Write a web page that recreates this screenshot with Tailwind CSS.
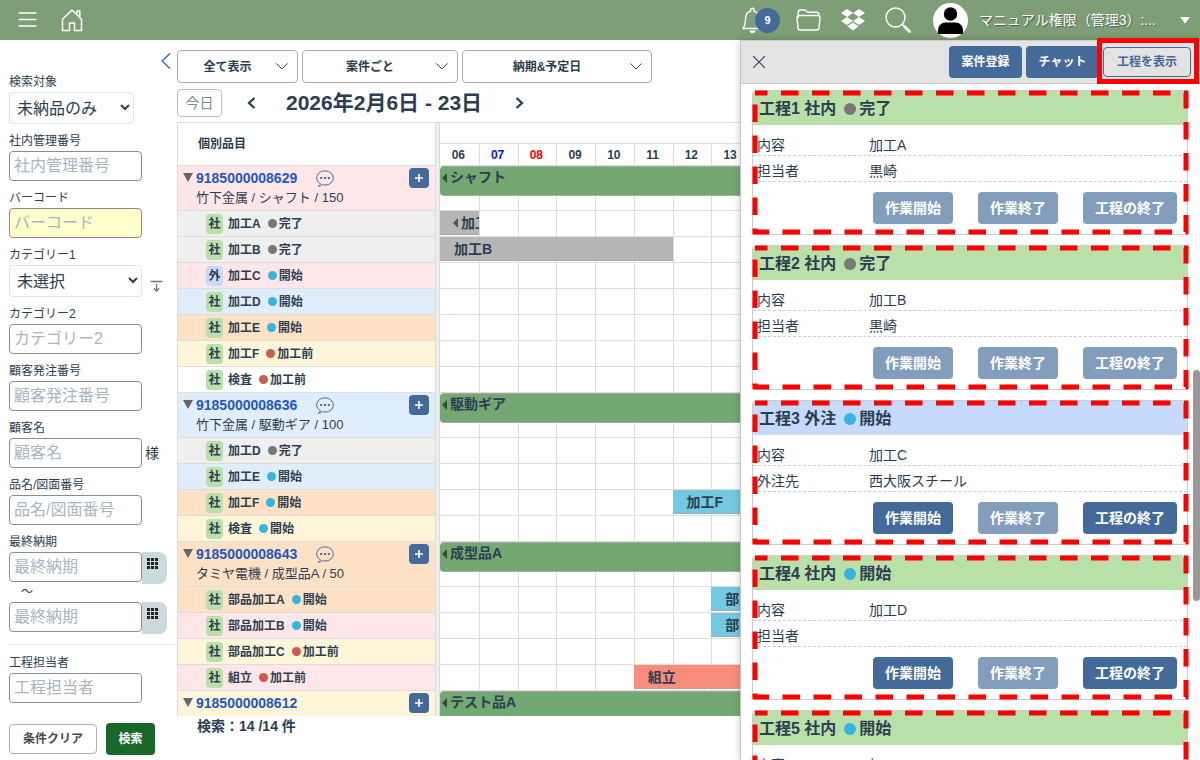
<!DOCTYPE html>
<html lang="ja">
<head>
<meta charset="utf-8">
<title>工程管理</title>
<script src="https://cdn.jsdelivr.net/npm/@tailwindcss/browser@4"></script>
</head>
<body class="flex h-screen flex-col overflow-hidden bg-white font-['Liberation_Sans','Noto_Sans_CJK_JP',sans-serif] text-[#2c3e50]">

<header class="flex h-10 shrink-0 items-center bg-[#7d9e76] pr-[9px] pl-[18px] text-white">
  <button type="button" aria-label="メニュー" class="mr-6">
    <svg class="block h-5 w-[19px]" viewBox="0 0 19 20" fill="none" stroke="currentColor" stroke-width="1.3" stroke-linecap="round"><path d="M1 3h17M1 9.5h17M1 16h17"/></svg>
  </button>
  <a href="#" aria-label="ホーム">
    <svg class="block h-6 w-[22px]" viewBox="0 0 22 24" fill="none" stroke="currentColor" stroke-width="1.5" stroke-linejoin="round"><path d="M1.5 11.3 11 2l9.5 9.3V22.5h-7V15h-5v7.500h-7zM16 6.500V3h2.800v6.400"/></svg>
  </a>
  <div class="flex-1"></div>
  <button type="button" aria-label="通知" class="relative mr-[16px] h-7 w-[38px]">
    <svg class="block h-7 w-5" viewBox="0 0 20 28" fill="none" stroke="currentColor" stroke-width="1.4" stroke-linejoin="round"><path d="M8.600 5.200V4a1.700 1.700 0 0 1 3.400 0v1.200c3.500.8 5 3.300 5 6.800 0 5.500 1 7.500 3 10.500H1C3 19.500 3.600 17.500 3.600 12c0-3.500 1.500-6 5-6.800z"/><path d="M7.500 24.500h6c-.5 2-1.500 2.500-3 2.500s-2.500-.5-3-2.500z" fill="currentColor" stroke="none"/></svg>
    <span class="absolute top-0.5 right-0 flex size-[25px] items-center justify-center rounded-full bg-[#436a98] text-[11px] font-bold">9</span>
  </button>
  <button type="button" aria-label="フォルダ" class="mr-5">
    <svg class="block h-[22px] w-[25px]" viewBox="0 0 25 22" fill="none" stroke="currentColor" stroke-width="1.400" stroke-linejoin="round"><path d="M2.200 9V3.200A2.200 2.200 0 0 1 4.400 1h4.300c1.600 0 1.600 2.300 3.200 2.300h8.800a2.200 2.200 0 0 1 2.200 2.200V7M3 6.500h19a2 2 0 0 1 2 2.300l-1 10.200a2.200 2.200 0 0 1-2.200 2H4.200a2.200 2.200 0 0 1-2.200-2L1 8.800a2 2 0 0 1 2-2.300z"/></svg>
  </button>
  <button type="button" aria-label="Dropbox" class="mr-5">
    <svg class="block h-[22px] w-6" viewBox="0 0 24 22" fill="currentColor"><path d="M6 0l6 4-6 4-6-4zM18 0l6 4-6 4-6-4zM6 8l6 4-6 4-6-4zM18 8l6 4-6 4-6-4zM12 13.500l5.600 3.800L12 21.500l-5.600-4.200z"/></svg>
  </button>
  <button type="button" aria-label="検索" class="mr-[22px]">
    <svg class="block size-[26px]" viewBox="0 0 26 26" fill="none" stroke="currentColor" stroke-linecap="round"><circle cx="10.500" cy="10.500" r="9.500" stroke-width="1.500"/><path d="M17.500 17.500 20 20" stroke-width="1.500"/><path d="m19.500 19.500 5 5" stroke-width="2.600"/></svg>
  </button>
  <button type="button" class="flex items-center">
    <svg class="mr-[11px] block size-[35px]" viewBox="0 0 35 35"><circle cx="17.500" cy="17.500" r="17.500" fill="#fff"/><circle cx="17.500" cy="11" r="6.700" fill="#000"/><path d="M5 31v-3.500c0-5 3.500-8 7.500-8h10c4 0 7.500 3 7.500 8V31z" fill="#000"/></svg>
    <span class="mr-[23px] text-[14px] leading-5 text-shadow-[1px_1px_1px_#00000066]">マニュアル権限（管理3）:...</span>
    <svg class="block h-2 w-3" viewBox="0 0 12 8"><path d="M1 1h10L6 7.500z" fill="#fff"/></svg>
  </button>
</header>

<div class="flex min-h-0 flex-1">

  <form class="flex w-[177px] shrink-0 flex-col pl-[9px]">
    <div class="flex h-8 items-end justify-end pr-1.5 pb-[3px]">
      <button type="button" aria-label="検索条件を閉じる"><svg class="block h-4 w-2.5" viewBox="0 0 10 16" fill="none" stroke="#2260c8" stroke-width="1.200"><path d="M9 .5 1 8l8 7.500"/></svg></button>
    </div>
    <label for="target" class="h-5 text-[12px] leading-5">検索対象</label>
    <div class="relative w-[125px]">
      <select id="target" class="block h-8 w-full appearance-none rounded border border-[#dbe4ec] bg-white pt-0.5 pl-[7px] text-[16px]"><option>未納品のみ</option></select>
      <svg class="pointer-events-none absolute top-3 right-1 h-[7px] w-[10px]" viewBox="0 0 10 7" fill="none" stroke="#2c3e50" stroke-width="2"><path d="m1 1 4 4 4-4"/></svg>
    </div>
    <label for="ctrl" class="pt-[7px] text-[12px] leading-5">社内管理番号</label>
    <input id="ctrl" placeholder="社内管理番号" class="h-[30px] w-[133px] rounded border border-[#8c8c8c] px-1 text-[16px] placeholder:text-[#a9b5c0]">
    <label for="bar" class="pt-[7px] text-[12px] leading-5">バーコード</label>
    <input id="bar" placeholder="バーコード" class="h-[30px] w-[133px] rounded border border-[#8c8c8c] bg-[#ffffcc] px-1 text-[16px] placeholder:text-[#a9b5c0]">
    <label for="cat1" class="pt-[7px] text-[12px] leading-5">カテゴリー1</label>
    <div class="flex items-end">
      <div class="relative w-[133px]">
        <select id="cat1" class="block h-8 w-full appearance-none rounded border border-[#dbe4ec] bg-white pt-0.5 pl-[7px] text-[16px]"><option>未選択</option></select>
        <svg class="pointer-events-none absolute top-3 right-1 h-[7px] w-[10px]" viewBox="0 0 10 7" fill="none" stroke="#2c3e50" stroke-width="2"><path d="m1 1 4 4 4-4"/></svg>
      </div>
      <button type="button" aria-label="カテゴリーを追加" class="ml-2 pb-[5px]"><svg class="block h-3 w-[13px]" viewBox="0 0 13 12" fill="none" stroke="#6b7883" stroke-width="1.300"><path d="M.5 1.500h12M6.500 4v7M3.800 8.300l2.700 2.700 2.700-2.700"/></svg></button>
    </div>
    <label for="cat2" class="pt-[7px] text-[12px] leading-5">カテゴリー2</label>
    <input id="cat2" placeholder="カテゴリー2" class="h-[30px] w-[133px] rounded border border-[#8c8c8c] px-1 text-[16px] placeholder:text-[#a9b5c0]">
    <label for="ono" class="pt-[7px] text-[12px] leading-5">顧客発注番号</label>
    <input id="ono" placeholder="顧客発注番号" class="h-[30px] w-[133px] rounded border border-[#8c8c8c] px-1 text-[16px] placeholder:text-[#a9b5c0]">
    <label for="cust" class="pt-[7px] text-[12px] leading-5">顧客名</label>
    <div class="flex items-center gap-[3px]">
      <input id="cust" placeholder="顧客名" class="h-[30px] w-[133px] rounded border border-[#8c8c8c] px-1 text-[16px] placeholder:text-[#a9b5c0]"><span class="text-[14px] leading-5">様</span>
    </div>
    <label for="part" class="pt-[7px] text-[12px] leading-5">品名/図面番号</label>
    <input id="part" placeholder="品名/図面番号" class="h-[30px] w-[133px] rounded border border-[#8c8c8c] px-1 text-[16px] placeholder:text-[#a9b5c0]">
    <label for="from" class="pt-[7px] text-[12px] leading-5">最終納期</label>
    <div class="flex items-start">
      <input id="from" placeholder="最終納期" class="h-[30px] w-[133px] rounded border border-[#8c8c8c] px-1 text-[16px] placeholder:text-[#a9b5c0]">
      <button type="button" aria-label="開始日を選択" class="flex h-8 w-[25px] justify-start rounded-r-lg bg-[#cbdadd] pt-1.5 pl-[5px]"><svg class="block size-[11px]" viewBox="0 0 11 11" fill="#222"><path d="M0 0h3v3H0zM4 0h3v3H4zM8 0h3v3H8zM0 4h3v3H0zM4 4h3v3H4zM8 4h3v3H8zM0 8h3v3H0zM4 8h3v3H4zM8 8h3v3H8z"/></svg></button>
    </div>
    <label for="to" aria-label="最終納期（終了）" class="h-[18px] pl-3 text-[12px] leading-[16px]">〜</label>
    <div class="flex items-start">
      <input id="to" placeholder="最終納期" class="h-[30px] w-[133px] rounded border border-[#8c8c8c] px-1 text-[16px] placeholder:text-[#a9b5c0]">
      <button type="button" aria-label="終了日を選択" class="flex h-8 w-[25px] justify-start rounded-r-lg bg-[#cbdadd] pt-1.5 pl-[5px]"><svg class="block size-[11px]" viewBox="0 0 11 11" fill="#222"><path d="M0 0h3v3H0zM4 0h3v3H4zM8 0h3v3H8zM0 4h3v3H0zM4 4h3v3H4zM8 4h3v3H8zM0 8h3v3H0zM4 8h3v3H4zM8 8h3v3H8z"/></svg></button>
    </div>
    <hr class="mt-2.5 border-[#e6e6e6]">
    <label for="staff" class="pt-2 text-[12px] leading-5">工程担当者</label>
    <input id="staff" placeholder="工程担当者" class="h-[30px] w-[133px] rounded border border-[#8c8c8c] px-1 text-[16px] placeholder:text-[#a9b5c0]">
    <div class="mt-5 flex items-center gap-[9px]">
      <button type="reset" class="h-[30px] w-[88px] rounded border border-[#aab3b5] bg-white text-[12px] font-bold text-[#4a4a4a]">条件クリア</button>
      <button type="submit" class="h-8 w-[49px] rounded bg-[#1b662b] text-[12px] font-bold text-white">検索</button>
    </div>
  </form>

  <main class="flex min-w-0 flex-1 flex-col pt-2.5">
    <div class="flex shrink-0 gap-1">
      <div class="relative w-[121px]">
        <select aria-label="表示" class="block h-[33px] w-full appearance-none rounded border border-[#aaa] bg-white pr-5 text-center text-[12px] font-bold"><option>全て表示</option></select>
        <svg class="pointer-events-none absolute top-[13px] right-2.5 h-[7px] w-3" viewBox="0 0 12 7" fill="none" stroke="#2c3e50"><path d="m.5.500 5.500 5.500L11.500.500"/></svg>
      </div>
      <div class="relative w-[156px]">
        <select aria-label="単位" class="block h-[33px] w-full appearance-none rounded border border-[#aaa] bg-white pr-5 text-center text-[12px] font-bold"><option>案件ごと</option></select>
        <svg class="pointer-events-none absolute top-[13px] right-2.5 h-[7px] w-3" viewBox="0 0 12 7" fill="none" stroke="#2c3e50"><path d="m.5.500 5.500 5.500L11.500.500"/></svg>
      </div>
      <div class="relative w-[190px]">
        <select aria-label="日付の種類" class="block h-[33px] w-full appearance-none rounded border border-[#aaa] bg-white pr-5 text-center text-[12px] font-bold"><option>納期&amp;予定日</option></select>
        <svg class="pointer-events-none absolute top-[13px] right-2.5 h-[7px] w-3" viewBox="0 0 12 7" fill="none" stroke="#2c3e50"><path d="m.5.500 5.500 5.500L11.500.500"/></svg>
      </div>
    </div>
    <div class="mt-1.5 flex h-7 shrink-0 items-center">
      <button type="button" class="h-7 w-[45px] rounded border border-[#bfbfbf] bg-white text-[14px] text-[#7f8a93]">今日</button>
      <button type="button" aria-label="前へ" class="ml-[25px]"><svg class="block h-3 w-[9px]" viewBox="0 0 9 12" fill="none" stroke="#2c3e50" stroke-width="2.300"><path d="M7.500 1 2 6l5.500 5"/></svg></button>
      <h1 class="ml-[30px] text-[21px] leading-7 font-bold whitespace-nowrap">2026年2月6日 - 23日</h1>
      <button type="button" aria-label="次へ" class="ml-[33px]"><svg class="block h-3 w-[9px]" viewBox="0 0 9 12" fill="none" stroke="#2c3e50" stroke-width="2.300"><path d="M1.500 1 7 6l-5.500 5"/></svg></button>
    </div>

    <section class="mt-[5px] flex min-h-0 flex-1 overflow-hidden border-t border-[#ddd]">
      <div class="w-[259px] shrink-0 border-x border-[#ddd]">
        <div class="h-[42px] pl-5 text-[12px] leading-[43px] font-bold">個別品目</div>
        <div id="items"></div>
      </div>
      <div class="w-1 shrink-0 border-r border-[#ddd] bg-[#eee]"></div>
      <div class="min-w-0 flex-1 overflow-hidden">
        <div class="h-5"></div>
        <div id="days" class="grid h-[22px] min-w-[310px] grid-cols-8 border-t border-[#ddd] text-center text-[12px] leading-[23px] font-bold"></div>
        <div id="chart"></div>
      </div>
    </section>
    <p class="h-11 shrink-0 pl-5 text-[14px] leading-[21px] font-bold">検索：14 /14 件</p>
  </main>

  <aside class="relative z-10 flex w-[460px] shrink-0 flex-col border-l border-[#c4c4c4] bg-white shadow-[0_0_8px_#00000033]">
    <div class="relative flex h-11 shrink-0 items-center gap-1 border-y border-[#ccc] bg-[#e3e3e3] pr-[9px] pl-3">
      <button type="button" aria-label="閉じる" class="mr-auto"><svg class="block size-3" viewBox="0 0 12 12" stroke="#2c3e50" stroke-width="1.100"><path d="m0 0 12 12M12 0 0 12"/></svg></button>
      <button type="button" class="h-8 w-[73px] rounded bg-[#436a98] text-[12px] font-bold text-white">案件登録</button>
      <button type="button" class="h-8 w-[73px] rounded bg-[#436a98] text-[12px] font-bold text-white">チャット</button>
      <button type="button" class="h-[30px] w-[88px] rounded border border-[#436a98] text-[12px] font-bold text-[#436a98]">工程を表示</button>
      <div class="pointer-events-none absolute -top-[3px] -bottom-px right-px w-[102px] border-5 border-[#f00]"></div>
    </div>
    <div id="cards" class="flex min-h-0 flex-1 flex-col gap-2.5 overflow-hidden pt-1.5 pr-3 pl-[11px]"></div>
    <div class="absolute top-[330px] right-0 h-[231px] w-[7px] rounded-full bg-[#999]"></div>
  </aside>
</div>

<script>
const dots = {
  '完了': 'bg-[#777]',
  '開始': 'bg-[#33b5e0]',
  '加工前': 'bg-[#cd5c50]'
};
const tones = {
  gray: 'bg-[#efefef]', pink: 'bg-[#ffe7e9]', blue: 'bg-[#e0eefb]',
  orange: 'bg-[#ffe2c5]', yellow: 'bg-[#fff6d9]', white: 'bg-white'
};
const groups = [
  { no: '9185000008629', note: '竹下金属 / シャフト / 150', name: 'シャフト', tone: 'pink', chat: true, rows: [
    ['社', '加工A', '完了', 'gray', { at: 'col-start-1 col-end-2 bg-[#b6b6b6] pl-[13px]', text: '加工A', arrow: true }],
    ['社', '加工B', '完了', 'gray', { at: 'col-start-1 col-end-7 bg-[#b6b6b6] pl-3.5', text: '加工B' }],
    ['外', '加工C', '開始', 'pink'], ['社', '加工D', '開始', 'blue'], ['社', '加工E', '開始', 'orange'],
    ['社', '加工F', '加工前', 'yellow'], ['社', '検査', '加工前', 'white']] },
  { no: '9185000008636', note: '竹下金属 / 駆動ギア / 100', name: '駆動ギア', tone: 'blue', chat: true, rows: [
    ['社', '加工D', '完了', 'gray'], ['社', '加工E', '開始', 'blue'],
    ['社', '加工F', '開始', 'orange', { at: 'col-start-7 col-end-9 bg-[#73c9e1] pl-3.5', text: '加工F' }],
    ['社', '検査', '開始', 'yellow']] },
  { no: '9185000008643', note: 'タミヤ電機 / 成型品A / 50', name: '成型品A', tone: 'orange', chat: true, rows: [
    ['社', '部品加工A', '開始', 'orange', { at: 'col-start-8 col-end-9 bg-[#73c9e1] pl-3.5', text: '部品加工A' }],
    ['社', '部品加工B', '開始', 'pink', { at: 'col-start-8 col-end-9 bg-[#73c9e1] pl-3.5', text: '部品加工B' }],
    ['社', '部品加工C', '加工前', 'yellow'],
    ['社', '組立', '加工前', 'pink', { at: 'col-start-6 col-end-9 bg-[#f98d7d] pl-3.5', text: '組立' }]] },
  { no: '9185000008612', note: '竹下金属 / テスト品A / 10', name: 'テスト品A', tone: 'yellow', rows: [] }
];

const arrow = '<svg class="block h-2.5 w-[5px] shrink-0" viewBox="0 0 5 10"><path d="M5 0v10L0 5z" fill="#000" fill-opacity=".55"/></svg>';
const chat = '<button type="button" aria-label="コメント" class="ml-auto"><svg class="block h-[17px] w-[18px]" viewBox="0 0 18 17" fill="none" stroke="#436a98"><path d="M2.300 16c1.600-.3 2.100-1.300 2-2.500C2 12.300.7 10.400.7 8 .7 4 4.300.9 9 .9S17.300 4 17.300 8s-3.600 7-8.300 7c-1 0-1.900-.1-2.700-.4C5.200 15.600 3.900 16.200 2.300 16z"/><path d="M4.200 7h2v2h-2zM8 7h2v2H8zM11.800 7h2v2h-2z" fill="#436a98" stroke="none"/></svg></button>';

document.getElementById('items').innerHTML = groups.map(g => `
  <div class="flex h-[45px] border-t border-[#ddd] pl-[5px] pr-1.5 pt-0.5 ${tones[g.tone]}">
    <button type="button" aria-label="開閉" class="mt-[5px] h-[9px] w-3"><svg class="block h-[9px] w-[10px]" viewBox="0 0 10 9"><path d="M0 0h10L5 9z" fill="#666"/></svg></button>
    <div class="ml-px">
      <div class="flex w-[138px] items-center leading-5"><a href="#" class="text-[14px] font-bold text-[#2258bd]">${g.no}</a>${g.chat ? chat : ''}</div>
      <div class="text-[13px] leading-[19px] whitespace-nowrap">${g.note}</div>
    </div>
    <button type="button" aria-label="工程を追加" class="ml-auto flex size-5 items-center justify-center rounded bg-[#436a98]"><svg class="block size-2" viewBox="0 0 8 8" stroke="#fff" stroke-width="1.600"><path d="M4 0v8M0 4h8"/></svg></button>
  </div>` + g.rows.map(r => `
  <div class="flex h-[26px] items-center border-t border-[#ddd] pl-7 text-[12px] font-bold ${tones[r[3]]}">
    <span class="mr-[5px] h-5 w-[17px] rounded text-center leading-5 ${r[0] === '外' ? 'bg-[#c5dafc]' : 'bg-[#b9e0a8]'}">${r[0]}</span>
    <span>${r[1]}</span>
    <span class="mr-[2px] ml-[7px] size-[9px] rounded-full ${dots[r[2]]}"></span>
    <span>${r[2]}</span>
  </div>`).join('')).join('');

document.getElementById('days').innerHTML = ['06', '07', '08', '09', '10', '11', '12', '13'].map((d, i) =>
  `<div class="pr-0.5 ${i ? 'border-l border-[#ddd]' : ''} ${d === '07' ? 'text-[#0018f5]' : d === '08' ? 'text-[#f00]' : ''}">${d}</div>`).join('');

const cells = [
  '<i class="col-start-1 row-start-1"></i>',
  '<i class="col-start-2 row-start-1 border-l border-[#ddd]"></i>',
  '<i class="col-start-3 row-start-1 border-l border-[#ddd]"></i>',
  '<i class="col-start-4 row-start-1 border-l border-[#ddd]"></i>',
  '<i class="col-start-5 row-start-1 border-l border-[#ddd]"></i>',
  '<i class="col-start-6 row-start-1 border-l border-[#ddd]"></i>',
  '<i class="col-start-7 row-start-1 border-l border-[#ddd]"></i>',
  '<i class="col-start-8 row-start-1 border-l border-[#ddd]"></i>'
].join('');

document.getElementById('chart').innerHTML = groups.map(g => `
  <div class="grid h-[45px] min-w-[310px] grid-cols-8 border-t border-[#ddd]">${cells}
    <div class="col-span-8 col-start-1 row-start-1 flex h-[30px] gap-[3px] rounded-l border-y border-[#a5a8a5] bg-[#73a873] pl-0.5 text-[14px] leading-[21px] font-bold"><span class="pt-1.5">${arrow}</span>${g.name}</div>
  </div>` + g.rows.map(r => `
  <div class="grid h-[26px] min-w-[310px] grid-cols-8 border-t border-[#ddd]">${cells}
    ${r[4] ? `<div class="row-start-1 flex h-6 items-center overflow-hidden border-b border-[#a8a8a8] text-[14px] leading-6 font-bold whitespace-nowrap ${r[4].at}">${r[4].arrow ? `<span class="mr-[3px]">${arrow}</span>` : ''}${r[4].text}</div>` : ''}
  </div>`).join('')).join('');

const steps = [
  ['工程1 社内', '完了', '担当者', '加工A', '黒崎'],
  ['工程2 社内', '完了', '担当者', '加工B', '黒崎'],
  ['工程3 外注', '開始', '外注先', '加工C', '西大阪スチール'],
  ['工程4 社内', '開始', '担当者', '加工D', ''],
  ['工程5 社内', '開始', '担当者', '加工E', '']
];
document.getElementById('cards').innerHTML = steps.map(([title, state, role, work, who]) => {
  const active = state === '開始';
  const tone = active ? 'bg-[#436a98]' : 'bg-[#839dbc]';
  return `
  <section class="relative shrink-0 rounded border border-[#ccc]">
    <h2 class="flex h-[34px] items-center rounded-t pt-0.5 pl-1.5 text-[16px] font-bold ${title.includes('外注') ? 'bg-[#c5dafc]' : 'bg-[#b9e0a8]'}">${title}<span class="mr-[3px] ml-2 size-3 rounded-full ${dots[state]}"></span>${state}</h2>
    <dl class="mt-[5px] text-[14px] leading-[21px]">
      <div class="flex h-[26px] border-b border-dashed border-[#ccc] pt-[5px] pl-1"><dt class="w-28">内容</dt><dd>${work}</dd></div>
      <div class="flex h-[26px] border-b border-dashed border-[#ccc] pt-[5px] pl-1"><dt class="w-28">${role}</dt><dd>${who}</dd></div>
    </dl>
    <div class="flex justify-end gap-[25px] py-2.5 pr-2.5 text-[14px] font-bold text-white text-shadow-[0_1px_1px_#00000033]">
      <button type="button" class="h-8 w-20 rounded ${tone}">作業開始</button>
      <button type="button" class="h-8 w-20 rounded bg-[#839dbc]">作業終了</button>
      <button type="button" class="h-8 w-[94px] rounded ${tone}">工程の終了</button>
    </div>
    <svg class="pointer-events-none absolute -inset-px h-[calc(100%+2px)] w-[calc(100%+2px)] overflow-visible" fill="none" stroke="#f00" stroke-width="5" stroke-dasharray="17.5 13.5" stroke-dashoffset="5"><rect x="3" y="3" class="h-[calc(100%-6px)] w-[calc(100%-5px)]"/></svg>
  </section>`;
}).join('');
</script>
</body>
</html>
